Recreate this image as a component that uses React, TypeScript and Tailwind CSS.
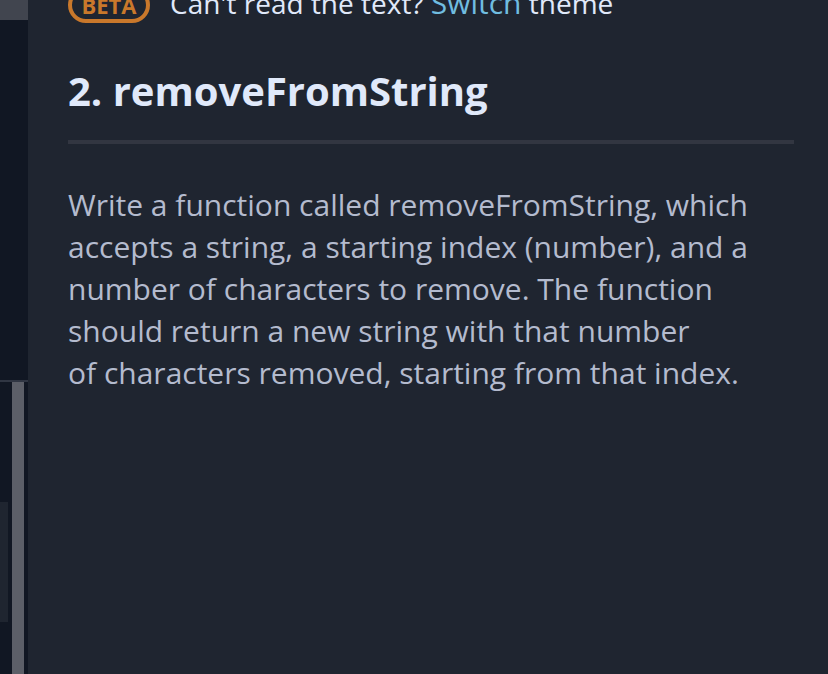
export default function App() {
  return (
    <div className="flex h-screen overflow-hidden bg-[#1f2530] font-['Open_Sans',sans-serif]">
      <aside className="flex w-7 shrink-0 flex-col bg-[#111723]">
        <div className="h-5 bg-[#41454f]" />
        <div className="h-[360px]" />
        <div className="flex flex-1 border-t-2 border-[#303643]">
          <div className="w-2 pt-30">
            <div className="h-30 bg-[#1f2530]" />
          </div>
          <div className="ml-1 w-3 bg-[#5c5f68]" />
        </div>
      </aside>
      <main className="min-w-0 flex-1 pr-[34px] pl-10">
        <div className="-mt-4 flex h-[38px] items-center gap-5 text-[28px] leading-[38px] text-[#e0e9fa]">
          <span className="mt-1 flex h-9 w-[82px] items-center justify-center rounded-full border-4 border-[#c9782b] text-[22px] leading-7 font-bold text-[#c9782b]">BETA</span>
          <p className="whitespace-nowrap">Can't read the text? <a href="#theme" className="text-[30px] text-[#70bde0]">Switch</a> theme</p>
        </div>
        <h1 className="mt-10 border-b-4 border-[#323641] pb-5 text-[40px] leading-[58px] font-bold text-[#e0e9fa]">2. removeFromString</h1>
        <p className="mt-10 text-[30px] leading-[42px] text-[#b4bbce]">
          Write a function called removeFromString, which accepts a string, a starting index (number), and a number of characters to remove. The function should return a new string with that number of&nbsp;characters removed, starting from that index.
        </p>
      </main>
    </div>
  );
}
